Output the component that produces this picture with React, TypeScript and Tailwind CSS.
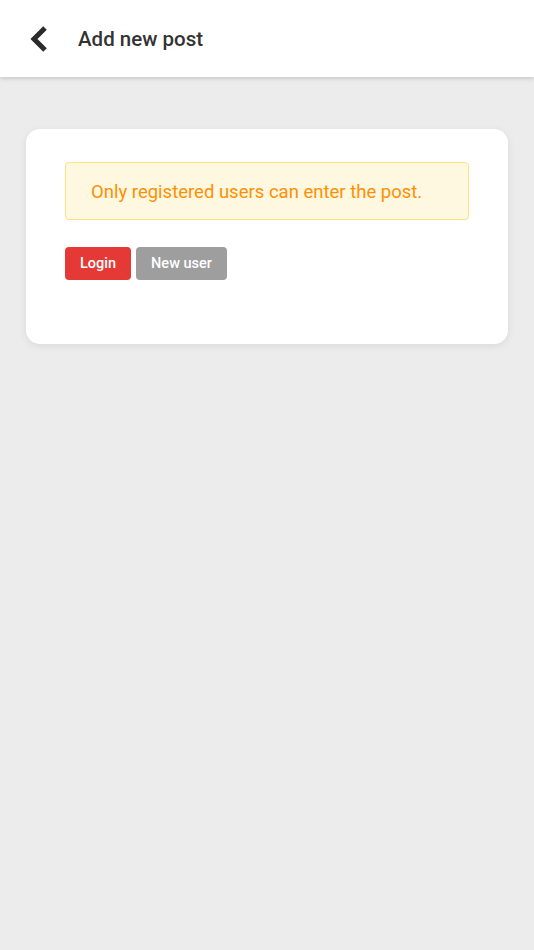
export default function App() {
    return (
        <div className="min-h-[950px] bg-[#ececec] font-['Roboto',sans-serif]">
            {/* header */}
            <header className="h-[77px] bg-white flex items-center shadow-[0_2px_4px_rgba(0,0,0,0.14)] relative">
                <button className="w-[78px] h-full flex items-center pl-[28px] text-[#2b2b2b]">
                    <svg width="22" height="28" viewBox="0 0 22 28" fill="none">
                        <path d="M17 3 L6 14 L17 25" stroke="currentColor" strokeWidth="5" strokeLinejoin="miter" />
                    </svg>
                </button>
                <h1 className="text-[20.5px] font-medium text-[#333333] mt-[2px]">Add new post</h1>
            </header>

            <div className="px-[26px] pt-[52px]">
                <div className="bg-white rounded-[14px] shadow-[0_2px_8px_rgba(0,0,0,0.08)] pt-[33px] pb-[64px] pl-[39px] pr-[39px]">
                    <div className="h-[58px] border border-[#ffe082] bg-[#fff8e1] rounded-[4px] flex items-center px-[25px] pt-[3px]">
                        <span className="text-[18.5px] text-[#ff8f00]">Only registered users can enter the post.</span>
                    </div>
                    <div className="flex gap-[5px] mt-[27px]">
                        <button className="h-[33px] w-[66px] rounded-[4px] bg-[#e53935] text-white text-[14.5px] font-medium pt-[1px]">
                            Login
                        </button>
                        <button className="h-[33px] w-[91px] rounded-[4px] bg-[#9e9e9e] text-white text-[14.5px] font-medium pt-[1px]">
                            New user
                        </button>
                    </div>
                </div>
            </div>
        </div>
    );
}
